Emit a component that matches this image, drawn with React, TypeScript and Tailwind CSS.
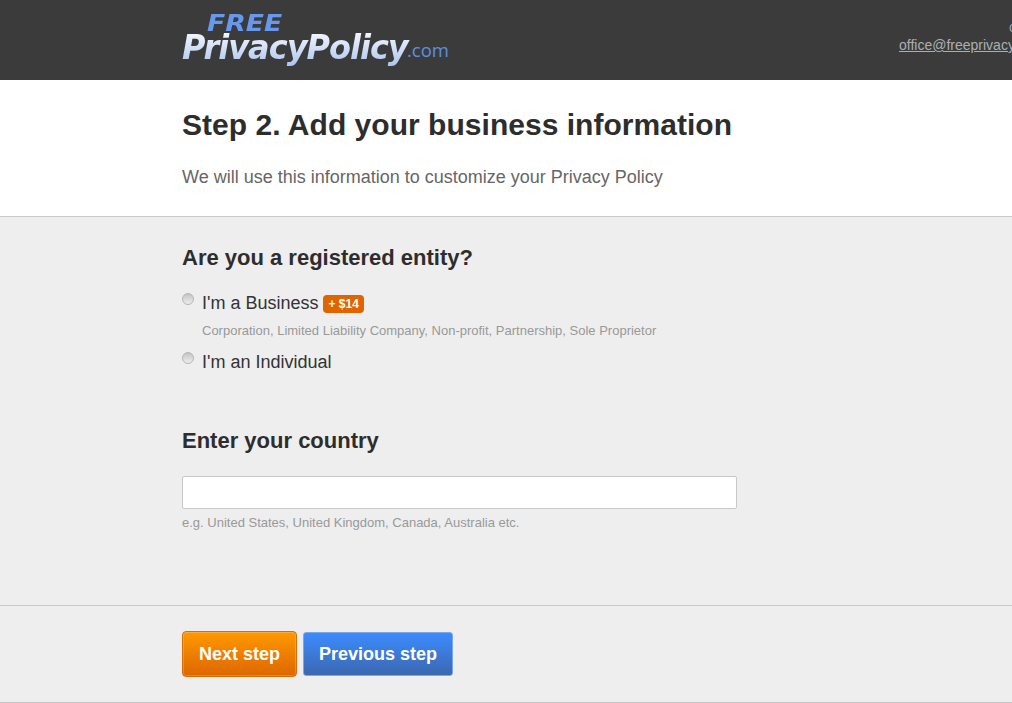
export default function App() {
  const sans = "font-['Liberation_Sans',Arial,sans-serif]";
  return (
    <div className={`h-[703px] w-[1012px] overflow-hidden bg-[#eeeeee] ${sans} text-[#333333]`}>
      <header className="relative flex h-20 bg-[#3b3b3b] pl-[182px]">
        <div className="relative h-20 w-[270px] font-['DejaVu_Sans',sans-serif] italic">
          <span className="absolute left-[25px] top-[9px] origin-left scale-x-[1.16] text-[23px] leading-[28px] font-bold text-[#6699ee]">FREE</span>
          <span className="absolute left-0 top-[27px] origin-top scale-y-[1.06] bg-gradient-to-b from-white to-[#a9c3ee] bg-clip-text pr-1 text-[32px] leading-[38px] font-bold tracking-[-1px] text-transparent">PrivacyPolicy</span>
          <span className="absolute left-[225px] top-[37px] font-['Open_Sans',sans-serif] text-[18.5px] leading-[26px] not-italic text-[#5b8fe0]">.com</span>
        </div>
        <span className="absolute left-[1009px] top-[18px] whitespace-nowrap text-[14px] leading-[18px] text-[#8fa3b3]">contact</span>
        <a className="absolute left-[899px] top-[36px] whitespace-nowrap text-[14px] leading-[18px] text-[#a9b0b5] underline">office@freeprivacypolicy.com</a>
      </header>

      <section className="h-[137px] border-b border-[#c9c9c9] bg-white pl-[182px]">
        <h1 className="pt-[27px] text-[30px] leading-[36px] font-bold tracking-[0.03px] text-[#2d2d2d]">Step 2. Add your business information</h1>
        <p className="pt-[23px] text-[18px] leading-[22px] text-[#666666]">We will use this information to customize your Privacy Policy</p>
      </section>

      <main className="h-[389px] border-b border-[#c9c9c9] pl-[182px]">
        <h2 className="pt-[28px] text-[22px] leading-[26px] font-bold text-[#2d2d2d]">Are you a registered entity?</h2>
        <div className="mt-[21px] flex items-start">
          <span className="mt-[1px] h-3 w-3 rounded-full border border-[#b5b5b5] bg-gradient-to-b from-[#c4c4c4] to-[#eeeeee]" />
          <div className="ml-2">
            <div className="flex items-center">
              <span className="text-[18px] leading-[22px]">I'm a Business</span>
              <span className="ml-[5px] mt-[2px] rounded-[4px] bg-[#de6500] px-[5px] text-[12px] leading-[18px] font-bold text-white">+ $14</span>
            </div>
            <p className="mt-[9px] text-[13px] leading-[16px] text-[#999999]">Corporation, Limited Liability Company, Non-profit, Partnership, Sole Proprietor</p>
          </div>
        </div>
        <div className="mt-[12px] flex items-start">
          <span className="mt-[1px] h-3 w-3 rounded-full border border-[#b5b5b5] bg-gradient-to-b from-[#c4c4c4] to-[#eeeeee]" />
          <span className="ml-2 text-[18px] leading-[22px]">I'm an Individual</span>
        </div>
        <h2 className="mt-[55px] text-[22px] leading-[26px] font-bold text-[#2d2d2d]">Enter your country</h2>
        <input className="mt-[22px] block h-[33px] w-[555px] rounded-[2px] border border-[#c9c9c9] bg-white" />
        <p className="mt-[6px] text-[13px] leading-[16px] text-[#999999]">e.g. United States, United Kingdom, Canada, Australia etc.</p>
      </main>

      <footer className="h-[97px] border-b border-[#c9c9c9] pl-[182px] pt-[25px]">
        <div className="flex items-start gap-[6px]">
          <button className="h-[46px] w-[115px] rounded-[4px] border border-[#d96f00] bg-gradient-to-b from-[#ff9900] to-[#dd6600] text-[18px] font-bold text-white shadow-[inset_0_0_0_1px_rgba(255,255,255,0.2)]">Next step</button>
          <button className="mt-[1px] h-[44px] w-[150px] rounded-[3px] border border-[#7aa7ea] bg-gradient-to-b from-[#3b8cff] to-[#3b68b0] text-[18px] font-bold text-white">Previous step</button>
        </div>
      </footer>
    </div>
  );
}
